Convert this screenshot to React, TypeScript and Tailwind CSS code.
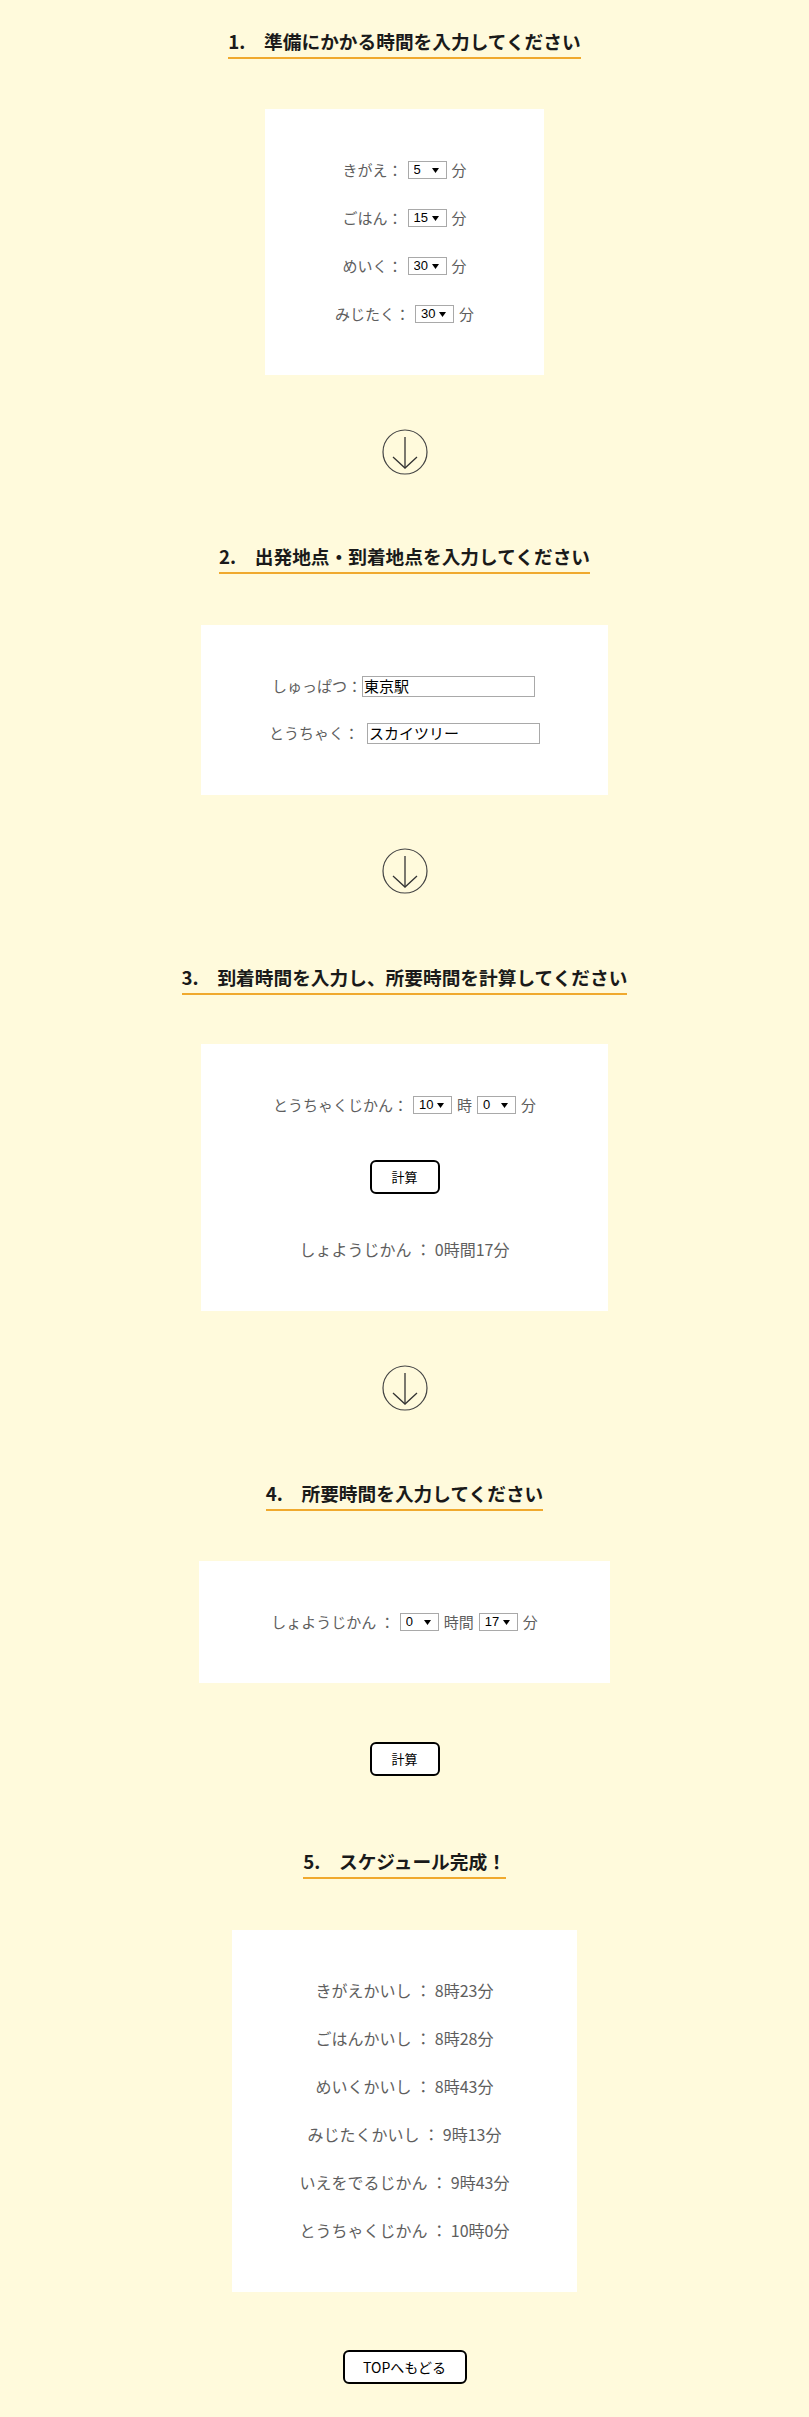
import React from "react";

const JP = "font-['Noto_Sans_CJK_JP',sans-serif]";

function Sel({ value }: { value: string }) {
  return (
    <span className="relative inline-flex mx-[5px]">
      <select
        defaultValue={value}
        className="appearance-none w-[39px] h-[18px] border border-[#a9a9a9] bg-white rounded-none pl-[5px] pr-0 py-0 text-[13px] leading-[16px] text-black font-['Liberation_Sans',sans-serif] outline-none"
      >
        <option>{value}</option>
      </select>
      <svg
        className="absolute right-[8px] top-[7px] pointer-events-none"
        width="7"
        height="5"
        viewBox="0 0 7 5"
      >
        <path d="M0 0H7L3.5 5Z" fill="#000" />
      </svg>
    </span>
  );
}

function Heading({ children }: { children: React.ReactNode }) {
  return (
    <h2
      className={`inline-block text-[18.7px] leading-[24px] font-bold text-[#1a1a1a] pb-[4px] border-b-2 border-[#f0a92e] ${JP}`}
    >
      {children}
    </h2>
  );
}

function Arrow() {
  return (
    <svg width="46" height="46" viewBox="0 0 46 46" className="block">
      <circle cx="23" cy="23" r="22" fill="none" stroke="#444" strokeWidth="1.2" />
      <path d="M23 8V39" stroke="#333" strokeWidth="1.3" fill="none" />
      <path d="M11 28L23 39L35 28" stroke="#333" strokeWidth="1.3" fill="none" />
    </svg>
  );
}

function Row({ children, cls = "text-[15px]" }: { children: React.ReactNode; cls?: string }) {
  return (
    <div className={`flex items-center justify-center h-[48px] text-[#5e5e5e] whitespace-pre ${cls}`}>
      {children}
    </div>
  );
}

function Button({ children, w, t = "text-[13px]" }: { children: React.ReactNode; w: string; t?: string }) {
  return (
    <button
      className={`${w} ${t} h-[34px] border-2 border-black rounded-[6px] bg-white text-black flex items-center justify-center ${JP}`}
    >
      {children}
    </button>
  );
}

export default function App() {
  return (
    <div className={`min-h-screen bg-[#fffadc] flex flex-col items-center pt-[29px] pb-[34px] ${JP}`}>
      {/* 1 */}
      <Heading>1.　準備にかかる時間を入力してください</Heading>
      <div className="mt-[50px] w-[279px] bg-white pt-[37px] pb-[37px]">
        <Row>
          <span>きがえ：</span>
          <Sel value="5" />
          <span>分</span>
        </Row>
        <Row>
          <span>ごはん：</span>
          <Sel value="15" />
          <span>分</span>
        </Row>
        <Row>
          <span>めいく：</span>
          <Sel value="30" />
          <span>分</span>
        </Row>
        <Row>
          <span>みじたく：</span>
          <Sel value="30" />
          <span>分</span>
        </Row>
      </div>
      <div className="mt-[54px]">
        <Arrow />
      </div>

      {/* 2 */}
      <div className="mt-[69px]">
        <Heading>2.　出発地点・到着地点を入力してください</Heading>
      </div>
      <div className="mt-[51px] w-[407px] bg-white pt-[38px] pb-[38px]">
        <div className="flex items-center justify-center h-[47px] text-[15px] text-[#5e5e5e]">
          <span className="ml-[-2px]">しゅっぱつ：</span>
          <input
            defaultValue="東京駅"
            className="w-[173px] h-[21px] border border-[#a9a9a9] px-[1px] text-[15px] text-black outline-none"
          />
        </div>
        <div className="flex items-center justify-center h-[47px] text-[15px] text-[#5e5e5e]">
          <span>とうちゃく：</span>
          <input
            defaultValue="スカイツリー"
            className="ml-[8px] w-[173px] h-[21px] border border-[#a9a9a9] px-[1px] text-[15px] text-black outline-none"
          />
        </div>
      </div>
      <div className="mt-[53px]">
        <Arrow />
      </div>

      {/* 3 */}
      <div className="mt-[71px]">
        <Heading>3.　到着時間を入力し、所要時間を計算してください</Heading>
      </div>
      <div className="mt-[49px] w-[407px] bg-white pt-[37px] pb-[38px]">
        <Row>
          <span>とうちゃくじかん：</span>
          <Sel value="10" />
          <span>時</span>
          <Sel value="0" />
          <span>分</span>
        </Row>
        <div className="h-[96px] flex items-center justify-center">
          <Button w="w-[70px]">計算</Button>
        </div>
        <Row cls="text-[16px]">しょようじかん ： 0時間17分</Row>
      </div>
      <div className="mt-[54px]">
        <Arrow />
      </div>

      {/* 4 */}
      <div className="mt-[70px]">
        <Heading>4.　所要時間を入力してください</Heading>
      </div>
      <div className="mt-[50px] w-[411px] bg-white pt-[37px] pb-[37px]">
        <Row>
          <span>しょようじかん ：</span>
          <Sel value="0" />
          <span>時間</span>
          <Sel value="17" />
          <span>分</span>
        </Row>
      </div>
      <div className="mt-[59px]">
        <Button w="w-[70px]">計算</Button>
      </div>

      {/* 5 */}
      <div className="mt-[73px]">
        <Heading>5.　スケジュール完成！</Heading>
      </div>
      <div className="mt-[51px] w-[345px] bg-white pt-[36px] pb-[38px]">
        <Row cls="text-[16px]">きがえかいし ： 8時23分</Row>
        <Row cls="text-[16px]">ごはんかいし ： 8時28分</Row>
        <Row cls="text-[16px]">めいくかいし ： 8時43分</Row>
        <Row cls="text-[16px]">みじたくかいし ： 9時13分</Row>
        <Row cls="text-[16px]">いえをでるじかん ： 9時43分</Row>
        <Row cls="text-[16px]">とうちゃくじかん ： 10時0分</Row>
      </div>
      <div className="mt-[58px]">
        <Button w="w-[124px]" t="text-[14px]">TOPへもどる</Button>
      </div>
    </div>
  );
}
